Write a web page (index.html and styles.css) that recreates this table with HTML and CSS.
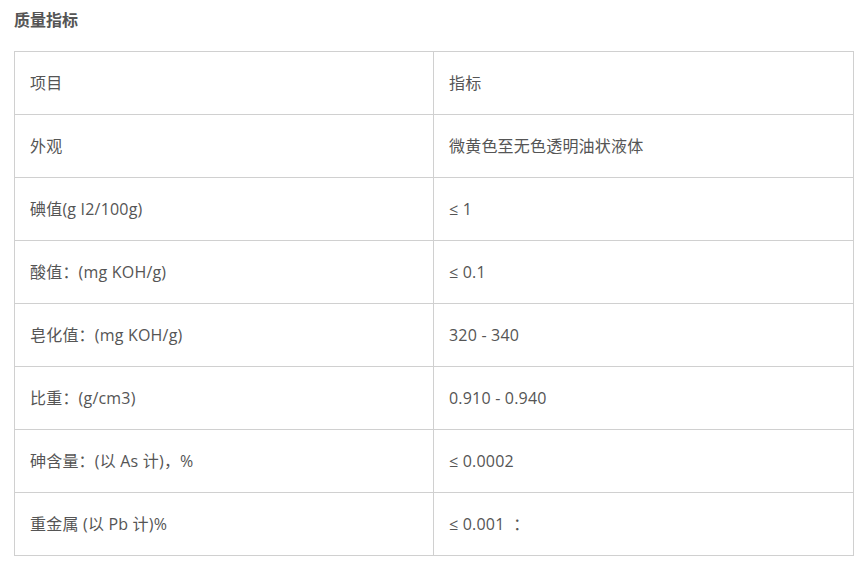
FILE: index.html
```html
<!DOCTYPE html>
<html lang="zh">
<head>
<meta charset="utf-8">
<title>质量指标</title>
<link rel="stylesheet" href="styles.css">
</head>
<body>
<div class="page">
  <h3 class="title">质量指标</h3>
  <table class="spec">
    <tbody>
      <tr><td>项目</td><td>指标</td></tr>
      <tr><td>外观</td><td>微黄色至无色透明油状液体</td></tr>
      <tr><td>碘值(g I2/100g)</td><td>≤ 1</td></tr>
      <tr><td>酸值：(mg KOH/g)</td><td>≤ 0.1</td></tr>
      <tr><td>皂化值：(mg KOH/g)</td><td>320 - 340</td></tr>
      <tr><td>比重：(g/cm3)</td><td>0.910 - 0.940</td></tr>
      <tr><td>砷含量：(以 As 计)，%</td><td>≤ 0.0002</td></tr>
      <tr><td>重金属 (以 Pb 计)%</td><td>≤ 0.001 &nbsp;：</td></tr>
    </tbody>
  </table>
</div>
</body>
</html>
```

FILE: styles.css
```css
html, body {
  margin: 0;
  padding: 0;
  background: #fff;
}
.page {
  padding: 9px 14px 0 14px;
  font-family: "Open Sans", "Noto Sans CJK SC", sans-serif;
  color: #555;
}
.title {
  margin: 0 0 20px 0;
  font-size: 16px;
  line-height: 22px;
  font-weight: bold;
  color: #555;
}
.spec {
  width: 840px;
  border-collapse: collapse;
  table-layout: fixed;
  font-size: 16px;
}
.spec td {
  border: 1px solid #d0d0d0;
  height: 63px;
  padding: 0 15px;
  vertical-align: middle;
  box-sizing: border-box;
  line-height: 22px;
  letter-spacing: 0.2px;
}
.spec td:first-child {
  width: 419px;
}
```
